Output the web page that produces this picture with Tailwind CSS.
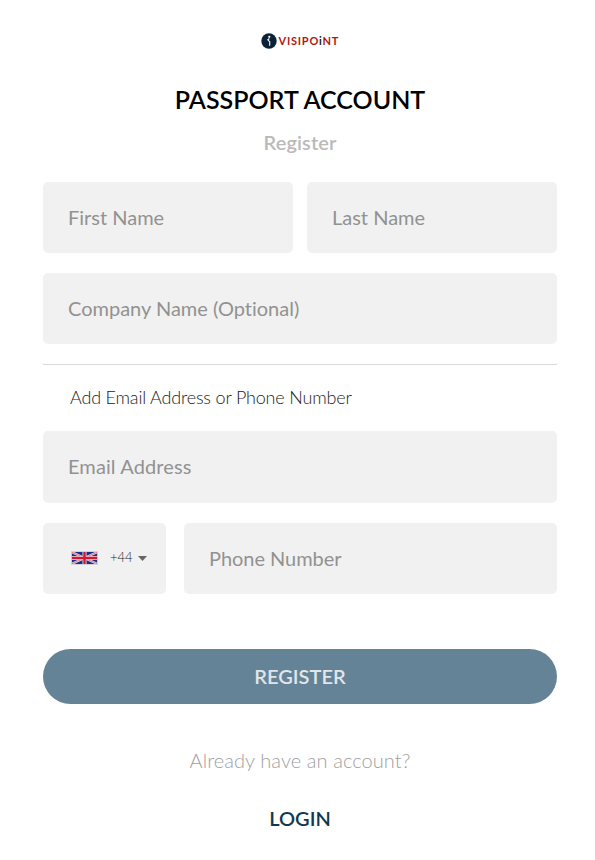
<!DOCTYPE html>
<html lang="en"><head><meta charset="utf-8"><title>Passport Account</title>
<script src="https://cdn.jsdelivr.net/npm/@tailwindcss/browser@4"></script></head>
<body class="bg-white font-['Lato',sans-serif] [font-variant-ligatures:none] w-[595px] h-[860px] overflow-hidden">
<main class="ml-[43px] w-[514px] flex flex-col">
<div class="mt-[33px] h-4 flex items-center justify-center gap-[2px]">
<svg class="w-4 h-4" viewBox="0 0 16 16"><circle cx="8" cy="8" r="7.7" fill="#0b2239"/><circle cx="8.3" cy="3.8" r="1.1" fill="#fff"/><path d="M8.3 5.5 6.8 6.8 8.8 9 8.6 12.8" fill="none" stroke="#fff" stroke-width="1.1"/></svg>
<span class="w-[61px] whitespace-nowrap text-[11px] leading-4 font-bold text-[#b3150f] tracking-[0.78px]">VISIPO<span class="text-[#0b2239]">i</span>NT</span></div>
<h1 class="mt-[32px] h-9 leading-9 text-center text-[25px] font-semibold text-black">PASSPORT ACCOUNT</h1>
<h2 class="mt-[10px] h-[30px] leading-[30px] text-center text-xl font-semibold text-[#bababa] tracking-[0.1px]">Register</h2>
<form class="flex flex-col text-xl">
<div class="mt-[25px] flex gap-[14px]">
<input placeholder="First Name" class="w-[250px] h-[71px] rounded-[5px] bg-[#f1f1f1] pl-[25px] pb-0.5 placeholder:text-[#929292]">
<input placeholder="Last Name" class="w-[250px] h-[71px] rounded-[5px] bg-[#f1f1f1] pl-[25px] pb-0.5 placeholder:text-[#929292]"></div>
<input placeholder="Company Name (Optional)" class="mt-5 h-[71px] rounded-[5px] bg-[#f1f1f1] pl-[25px] pb-0.5 placeholder:text-[#929292]">
<hr class="mt-5 border-[#d9d9d9]">
<p class="mt-[17px] h-[30px] leading-[30px] pl-[27px] text-lg font-light text-[#222] tracking-[-0.18px]">Add Email Address or Phone Number</p>
<input placeholder="Email Address" class="mt-[19px] h-[72px] rounded-[5px] bg-[#f1f1f1] pl-[25px] pb-0.5 tracking-[0.1px] placeholder:text-[#929292]">
<div class="mt-5 flex gap-[18px]">
<div class="w-[123px] h-[71px] rounded-[5px] bg-[#f1f1f1] pl-[28px] pb-px flex items-center">
<svg class="w-[27px] h-[14px] shrink-0" viewBox="0 0 27 14"><path fill="#17308a" d="M.5.8h26v12.4H.5z"/><path d="M.5 1l26 12M26.5 1l-26 12" stroke="#ead9e2" stroke-width="2.2"/><path d="M.5 1l26 12M26.5 1l-26 12" stroke="#d8505f" stroke-width=".7"/><path d="M13.5 1v12M.5 7h26" stroke="#f5dde0" stroke-width="4"/><path d="M13.5 1v12M.5 7h26" stroke="#d8142f" stroke-width="2.4"/><path d="M.5.5h26v13H.5z" fill="none" stroke="#d5d5dc" stroke-width=".8"/></svg>
<span class="ml-[12px] -mt-px text-[13px] font-light text-[#222]">+44</span>
<svg class="ml-[5px] w-[9px] h-[5px]" viewBox="0 0 9 5"><path d="M0 0h9L4.5 5z" fill="#666"/></svg></div>
<input placeholder="Phone Number" class="w-[373px] h-[71px] rounded-[5px] bg-[#f1f1f1] pl-[25px] pb-0.5 tracking-[-0.05px] placeholder:text-[#929292]"></div>
<button type="button" class="mt-[55px] h-[55px] pb-0.5 rounded-full bg-[#658397] text-xl font-semibold text-[#e0e6ea]">REGISTER</button>
</form>
<p class="mt-[41px] h-[30px] leading-[30px] text-center text-xl font-light text-[#a0a0a0] tracking-[0.08px]">Already have an account?</p>
<a class="mt-[28px] h-[30px] leading-[30px] text-center text-xl font-semibold text-[#12384f]">LOGIN</a>
</main></body></html>
